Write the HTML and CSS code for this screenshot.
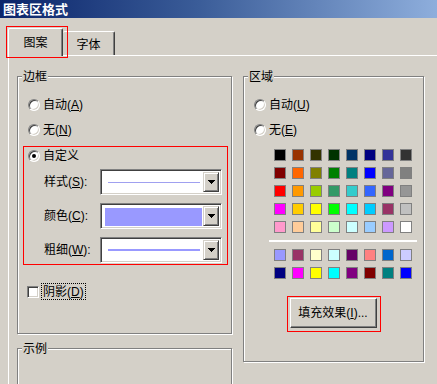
FILE: index.html
```html
<!DOCTYPE html>
<html>
<head>
<meta charset="utf-8">
<link rel="stylesheet" href="styles.css">
</head>
<body>
<div class="window">
  <div class="titlebar">图表区格式</div>
  <div class="tabs">
    <div class="tab active"><span class="mark"></span>图案</div>
    <div class="tab">字体</div>
  </div>
  <div class="panel">
    <div class="col">
      <div class="group g-border">
        <span class="legend">边框</span>
        <div class="row first"><span class="radio"></span>自动(<u>A</u>)</div>
        <div class="row"><span class="radio"></span>无(<u>N</u>)</div>
        <div class="custom">
          <div class="row row-custom"><span class="radio checked"></span>自定义</div>
          <div class="field">
            <span class="flabel">样式(<u>S</u>):</span>
            <div class="combo"><div class="cval"><div class="line thin"></div></div><div class="cbtn"><svg width="7" height="4" viewBox="0 0 7 4"><path d="M0 0h7v1h-1v1h-1v1h-1v1h-1v-1h-1v-1h-1v-1h-1z"/></svg></div></div>
          </div>
          <div class="field">
            <span class="flabel">颜色(<u>C</u>):</span>
            <div class="combo"><div class="cval color"><div class="fill"></div></div><div class="cbtn"><svg width="7" height="4" viewBox="0 0 7 4"><path d="M0 0h7v1h-1v1h-1v1h-1v1h-1v-1h-1v-1h-1v-1h-1z"/></svg></div></div>
          </div>
          <div class="field">
            <span class="flabel">粗细(<u>W</u>):</span>
            <div class="combo"><div class="cval"><div class="line thick"></div></div><div class="cbtn"><svg width="7" height="4" viewBox="0 0 7 4"><path d="M0 0h7v1h-1v1h-1v1h-1v1h-1v-1h-1v-1h-1v-1h-1z"/></svg></div></div>
          </div>
        </div>
        <div class="check"><span class="box"></span><span class="focus">阴影(<u>D</u>)</span></div>
      </div>
      <div class="group g-sample">
        <span class="legend">示例</span>
      </div>
    </div>
    <div class="group g-area">
      <span class="legend">区域</span>
      <div class="row first"><span class="radio"></span>自动(<u>U</u>)</div>
      <div class="row"><span class="radio"></span>无(<u>E</u>)</div>
      <div class="grid">
        <span class="sw" style="background:#000000"></span><span class="sw" style="background:#993300"></span><span class="sw" style="background:#333300"></span><span class="sw" style="background:#003300"></span><span class="sw" style="background:#003366"></span><span class="sw" style="background:#000080"></span><span class="sw" style="background:#333399"></span><span class="sw" style="background:#333333"></span>
        <span class="sw" style="background:#800000"></span><span class="sw" style="background:#ff6600"></span><span class="sw" style="background:#808000"></span><span class="sw" style="background:#008000"></span><span class="sw" style="background:#008080"></span><span class="sw" style="background:#0000ff"></span><span class="sw" style="background:#666699"></span><span class="sw" style="background:#808080"></span>
        <span class="sw" style="background:#ff0000"></span><span class="sw" style="background:#ff9900"></span><span class="sw" style="background:#99cc00"></span><span class="sw" style="background:#339966"></span><span class="sw" style="background:#33cccc"></span><span class="sw" style="background:#3366ff"></span><span class="sw" style="background:#800080"></span><span class="sw" style="background:#969696"></span>
        <span class="sw" style="background:#ff00ff"></span><span class="sw" style="background:#ffcc00"></span><span class="sw" style="background:#ffff00"></span><span class="sw" style="background:#00ff00"></span><span class="sw" style="background:#00ffff"></span><span class="sw" style="background:#00ccff"></span><span class="sw" style="background:#993366"></span><span class="sw" style="background:#c0c0c0"></span>
        <span class="sw" style="background:#ff99cc"></span><span class="sw" style="background:#ffcc99"></span><span class="sw" style="background:#ffff99"></span><span class="sw" style="background:#ccffcc"></span><span class="sw" style="background:#ccffff"></span><span class="sw" style="background:#99ccff"></span><span class="sw" style="background:#cc99ff"></span><span class="sw" style="background:#ffffff"></span>
      </div>
      <div class="sep"></div>
      <div class="grid grid2">
        <span class="sw" style="background:#9999ff"></span><span class="sw" style="background:#993366"></span><span class="sw" style="background:#ffffcc"></span><span class="sw" style="background:#ccffff"></span><span class="sw" style="background:#660066"></span><span class="sw" style="background:#ff8080"></span><span class="sw" style="background:#0066cc"></span><span class="sw" style="background:#ccccff"></span>
        <span class="sw" style="background:#000080"></span><span class="sw" style="background:#ff00ff"></span><span class="sw" style="background:#ffff00"></span><span class="sw" style="background:#00ffff"></span><span class="sw" style="background:#800080"></span><span class="sw" style="background:#800000"></span><span class="sw" style="background:#008080"></span><span class="sw" style="background:#0000ff"></span>
      </div>
      <div class="btnwrap"><div class="btn">填充效果(<u>I</u>)...</div></div>
    </div>
  </div>
</div>
</body>
</html>
```

FILE: styles.css
```css
* { box-sizing: border-box; }
html, body { margin: 0; padding: 0; }
body {
  background: #d4d0c8;
  font-family: "Liberation Sans", "Noto Sans CJK SC", sans-serif;
  font-size: 12px;
  color: #000;
}
u { text-decoration: underline; text-underline-offset: 1px; }
.window {
  width: 437px;
  height: 384px;
  overflow: hidden;
  background: #d4d0c8;
}
.titlebar {
  height: 18px;
  line-height: 18px;
  padding-left: 3px;
  background: linear-gradient(to right, #0a246a 0%, #3a5c98 45%, #8eaedc 100%);
  color: #fff;
  font-family: "Noto Sans CJK SC", sans-serif;
  font-weight: bold;
  font-size: 13px;
}
.tabs {
  display: flex;
  align-items: flex-end;
  height: 37px;
  padding-left: 8px;
}
.tab {
  position: relative;
  height: 24px;
  width: 52px;
  display: flex;
  align-items: center;
  justify-content: center;
  background: #d4d0c8;
  border-top: 1px solid #fff;
  border-right: 1px solid #404040;
  border-radius: 2px 2px 0 0;
  box-shadow: inset -1px 0 0 #808080;
  font-family: "Noto Sans CJK SC", sans-serif;
  font-size: 12px;
  line-height: 14px;
}
.tab.active {
  width: 55px;
  height: 28px;
  margin-bottom: -1px;
  z-index: 1;
  border-left: 1px solid #fff;
  padding-bottom: 2px;
}
.mark {
  position: absolute;
  left: -3px;
  top: -3px;
  right: -6px;
  bottom: -2px;
  border: 1px solid #ff0000;
}
.panel {
  width: 460px;
  height: 340px;
  margin-left: 8px;
  border-top: 1px solid #fff;
  border-left: 1px solid #fff;
  padding: 20px 0 0 8px;
  display: flex;
  gap: 11px;
  align-items: flex-start;
}
.col { display: flex; flex-direction: column; }
.group {
  border: 1px solid #808080;
  box-shadow: 1px 1px 0 #fff, inset 1px 1px 0 #fff;
  display: flex;
  flex-direction: column;
  align-items: flex-start;
}
.legend {
  margin: -8px 0 0 4px;
  padding: 0 1px;
  height: 14px;
  line-height: 14px;
  background: #d4d0c8;
  font-family: "Noto Sans CJK SC", sans-serif;
}
.g-border { width: 215px; height: 258px; }
.g-sample { width: 215px; height: 80px; margin-top: 14px; }
.g-area { width: 181px; height: 286px; }
.row {
  display: flex;
  align-items: center;
  height: 25px;
  padding-left: 10px;
  line-height: 14px;
}
.row.first { margin-top: 9px; }
.radio {
  position: relative;
  flex: none;
  width: 12px;
  height: 12px;
  margin-right: 3px;
  border-radius: 50%;
  background: #fff;
  border: 1px solid;
  border-color: #808080 #fff #fff #808080;
  box-shadow: inset 1px 1px 0 #404040, inset -1px -1px 0 #d4d0c8;
}
.radio.checked::after {
  content: "";
  position: absolute;
  left: 3px;
  top: 3px;
  width: 4px;
  height: 4px;
  border-radius: 50%;
  background: #000;
}
.custom {
  margin: 4px 0 0 5px;
  width: 205px;
  border: 1px solid #ff0000;
  padding: 0 0 1px 0;
  display: flex;
  flex-direction: column;
}
.row.row-custom { height: 17px; padding-left: 4px; }
.field {
  display: flex;
  align-items: center;
  height: 26px;
  margin-top: 8px;
  padding-left: 20px;
}
.row-custom + .field { margin-top: 5px; }
.flabel { width: 56px; line-height: 14px; }
.combo {
  display: flex;
  width: 122px;
  height: 26px;
  border: 1px solid;
  border-color: #808080 #fff #fff #808080;
  box-shadow: inset 1px 1px 0 #404040, inset -1px -1px 0 #d4d0c8;
  padding: 2px;
  background: #fff;
}
.cval {
  flex: 1;
  display: flex;
  align-items: center;
  padding: 0 3px 0 5px;
  background: #fff;
}
.cval.color { padding: 2px 1px 0 2px; align-items: stretch; }
.fill { flex: 1; background: #9999ff; }
.line { flex: 1; background: #a0a0f0; }
.line.thin { height: 1px; }
.line.thick { height: 2px; background: #9999ff; }
.cbtn {
  width: 16px;
  display: flex;
  align-items: center;
  justify-content: center;
  background: #d4d0c8;
  border: 1px solid;
  border-color: #d4d0c8 #404040 #404040 #d4d0c8;
  box-shadow: inset 1px 1px 0 #fff, inset -1px -1px 0 #808080;
}
.cbtn svg { display: block; fill: #000; }
.check {
  display: flex;
  align-items: center;
  height: 17px;
  margin: 18px 0 0 9px;
  line-height: 14px;
}
.box {
  width: 12px;
  height: 12px;
  margin-right: 2px;
  background: #fff;
  border: 1px solid;
  border-color: #808080 #fff #fff #808080;
  box-shadow: inset 1px 1px 0 #404040, inset -1px -1px 0 #d4d0c8;
}
.focus {
  border: 1px dotted #000;
  padding: 1px 1px 0 1px;
  height: 17px;
  line-height: 14px;
}
.grid {
  display: grid;
  grid-template-columns: repeat(8, 12px);
  grid-auto-rows: 12px;
  gap: 6px;
  margin: 7px 0 0 30px;
}
.grid2 { margin-top: 7px; }
.sw { border: 1px solid #808080; }
.sep {
  width: 148px;
  height: 2px;
  margin: 7px 0 0 25px;
  background: #fff;
}
.btnwrap {
  align-self: center;
  margin-top: 17px;
  border: 1px solid #ff0000;
  padding: 1px 3px 3px 2px;
}
.btn {
  width: 87px;
  height: 30px;
  display: flex;
  align-items: center;
  justify-content: center;
  background: #d4d0c8;
  border: 1px solid;
  border-color: #fff #404040 #404040 #fff;
  box-shadow: inset -1px -1px 0 #808080;
  line-height: 14px;
}
```
